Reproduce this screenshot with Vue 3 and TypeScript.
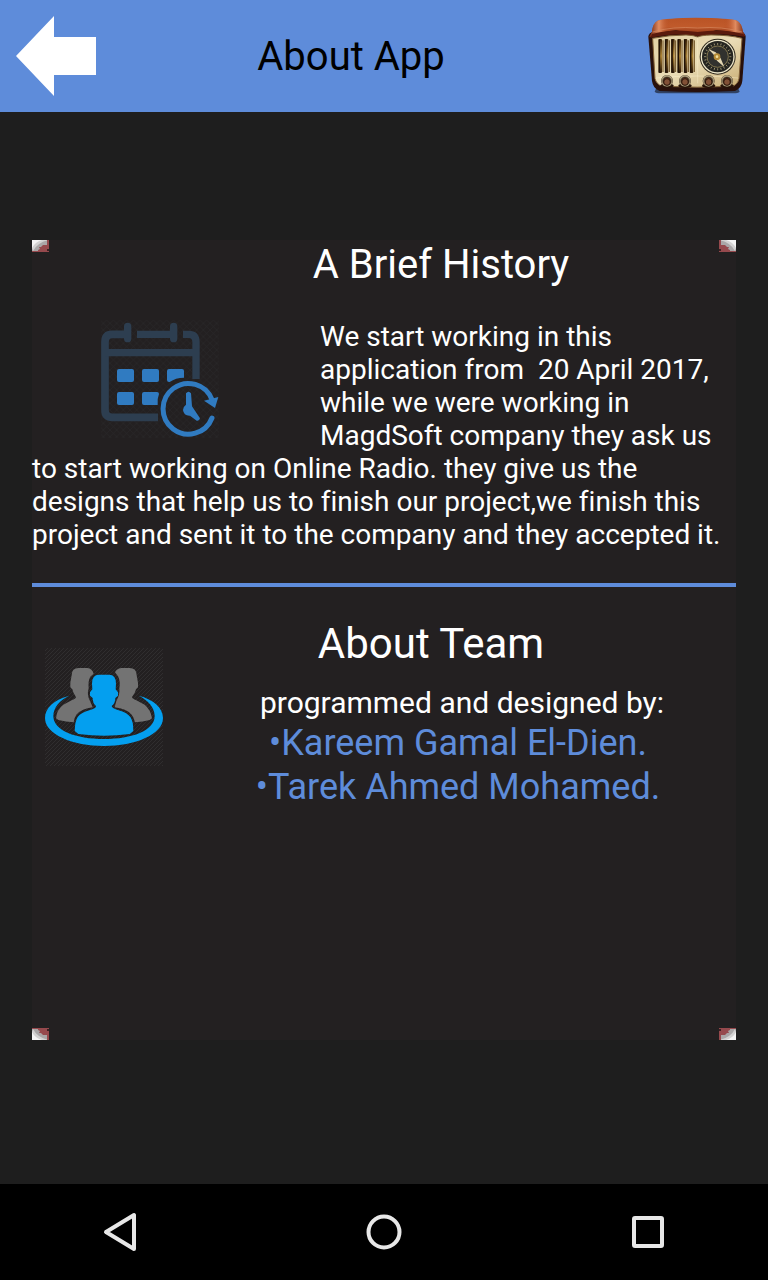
<script setup lang="ts">
const history: string =
  'We start working in this application from  20 April 2017, while we were working in MagdSoft company they ask us to start working on Online Radio. they give us the designs that help us to finish our project,we finish this project and sent it to the company and they accepted it.'
const members: string[] = ['Kareem Gamal El-Dien.', 'Tarek Ahmed Mohamed.']
const corners: string[] = ['top-left', 'top-right', 'bottom-left', 'bottom-right']
const grilles: number[] = [73, 92, 111, 130, 149, 167]
const knobs: number[] = [93, 147, 218, 273]
const ticks: number[] = Array.from({ length: 24 }, (_, i) => i * 15)
</script>

<template>
  <div class="page">
    <header class="bar">
      <button class="back" type="button" aria-label="Back">
        <svg viewBox="0 0 80 80"><path d="M0 40 38 0V21H80V59H38V80Z" fill="#fff" /></svg>
      </button>
      <h1>About App</h1>
      <svg class="radio" viewBox="0 0 372 312" aria-hidden="true">
        <defs>
          <linearGradient id="wood" x1="0" y1="0" x2="0" y2="1">
            <stop offset="0" stop-color="#b95325" />
            <stop offset=".45" stop-color="#c05a2b" />
            <stop offset="1" stop-color="#7c2911" />
          </linearGradient>
          <linearGradient id="woodside" x1="0" y1="0" x2="1" y2="0">
            <stop offset="0" stop-color="#6c200d" />
            <stop offset=".1" stop-color="#e08b60" />
            <stop offset=".22" stop-color="#b3481e" stop-opacity="0" />
            <stop offset=".78" stop-color="#b3481e" stop-opacity="0" />
            <stop offset=".9" stop-color="#e08b60" />
            <stop offset="1" stop-color="#6c200d" />
          </linearGradient>
          <linearGradient id="face" x1="0" y1="0" x2="1" y2="1">
            <stop offset="0" stop-color="#e2d1a5" />
            <stop offset=".5" stop-color="#eadcb6" />
            <stop offset="1" stop-color="#c9ad73" />
          </linearGradient>
          <linearGradient id="grille" x1="0" y1="0" x2="0" y2="1">
            <stop offset="0" stop-color="#3c2409" />
            <stop offset=".5" stop-color="#b08636" />
            <stop offset="1" stop-color="#2b1707" />
          </linearGradient>
          <radialGradient id="knob">
            <stop offset="0" stop-color="#b07145" />
            <stop offset=".45" stop-color="#67351b" />
            <stop offset=".6" stop-color="#3b2b1c" />
            <stop offset=".85" stop-color="#a99b7a" />
            <stop offset="1" stop-color="#443626" />
          </radialGradient>
        </defs>
        <path d="M60 254H307L311 263Q306 268 292 268H74Q60 268 56 263Z" fill="#304264" />
        <path d="M37 98Q38 86 52 83L183 72 317 83Q328 87 329 98L319 231Q316 254 297 261 184 267 71 261 51 254 48 231Z" fill="#28100b" />
        <path d="M48 83Q50 58 65 50Q90 42 180 41 280 42 303 50 316 56 321 83L327 96Q300 83 240 79L185 94 120 79Q70 83 40 100Z" fill="url(#wood)" />
        <path d="M48 83Q50 58 65 50Q90 42 180 41 280 42 303 50 316 56 321 83L327 96Q300 83 240 79L185 94 120 79Q70 83 40 100Z" fill="url(#woodside)" />
        <path d="M50 84Q110 66 185 72 260 66 318 84" fill="none" stroke="#d98d62" stroke-width="2" />
        <path d="M48 90Q110 72 185 84 260 72 322 90L326 98Q262 84 185 96 110 84 43 102Z" fill="#5a1a0d" />
        <path d="M50 103Q100 93 150 93 175 94 185 99 195 94 225 93 280 93 318 103L309 224Q306 240 290 247 184 252 78 247 61 240 57 224Z" fill="url(#face)" stroke="#84643a" stroke-width="3" />
        <path d="M185 100V238M60 222Q184 210 306 222" fill="none" stroke="#fff5d5" stroke-width="2" opacity=".6" />
        <g v-for="x in grilles" :key="x">
          <rect :x="x - 5" y="105" width="10" height="102" rx="3" fill="url(#grille)" />
          <path :d="`M${x - 3} 106V206`" stroke="#211207" stroke-width="5" />
          <path :d="`M${x + 8} 109V204`" stroke="#6a4b1d" stroke-width="3" />
        </g>
        <circle cx="245" cy="158" r="54" fill="#30291d" />
        <circle cx="245" cy="158" r="51" fill="#eee7ca" />
        <circle cx="245" cy="158" r="47" fill="#252521" />
        <g stroke="#c3b78e" stroke-width="2">
          <path v-for="t in ticks" :key="t" d="M245 117V123" :transform="`rotate(${t} 245 158)`" />
        </g>
        <circle cx="245" cy="158" r="32" fill="#31312e" stroke="#a7955d" stroke-width="2" />
        <path d="M217 135 239 145 254 163 265 189 243 170 232 151Z" fill="#e4d7b2" />
        <circle cx="243" cy="158" r="10" fill="#b48b37" />
        <circle cx="243" cy="158" r="4" fill="#f4df9b" />
        <g v-for="x in knobs" :key="x">
          <ellipse :cx="x" cy="245" rx="20" ry="7" fill="#271309" />
          <circle :cx="x" cy="231" r="18" fill="url(#knob)" />
          <path :d="`M${x - 14} 223Q${x} 208 ${x + 14} 223`" fill="none" stroke="#b5a884" stroke-width="3" />
          <circle :cx="x" cy="234" r="10" fill="#815036" stroke="#2c160b" stroke-width="3" />
        </g>
      </svg>
    </header>

    <main>
      <article class="panel">
        <svg v-for="c in corners" :key="c" class="corner" :class="c" viewBox="0 0 17 13" aria-hidden="true">
          <path d="M0 0H17V12H0Z" fill="#aaa7a8" />
          <path d="M0 0H15Q4 2 0 9Z" fill="#f4f4f4" />
          <path d="M10 0H16Q5 3 1 11L0 8Q3 2 10 0Z" fill="#d3d2d2" />
          <path d="M15 0H17V12H0V11H6V10L8 9 7 7H9L11 5H15Z" fill="#96494d" />
          <path d="M15 9H17V11H15Z" fill="#3a2022" />
        </svg>

        <section class="history">
          <h2>A Brief History</h2>
          <svg class="calendar" viewBox="33 30 354 354" aria-hidden="true">
            <defs>
              <pattern id="mesh" width="20" height="20" patternUnits="userSpaceOnUse">
                <path d="M0 0 20 20M20 0 0 20" stroke="#2a2829" stroke-width="2" />
              </pattern>
            </defs>
            <rect x="33" y="30" width="354" height="354" fill="url(#mesh)" />
            <g fill="none" stroke="#2d3e50" stroke-width="22">
              <path d="M113 73H66Q45 73 45 96V300Q45 322 67 322H204" stroke-width="23" />
              <path d="M141 73H251M279 73H296Q318 73 318 96V207M45 128H318" />
              <path d="M113 49V86M251 49V86" stroke-linecap="round" />
            </g>
            <g fill="#307bc1">
              <rect x="81" y="177" width="51" height="39" rx="6" />
              <rect x="156" y="177" width="51" height="39" rx="6" />
              <path d="M237 177H276Q282 177 282 183V203Q257 203 239 216H237Q231 216 231 210V183Q231 177 237 177Z" />
              <rect x="81" y="246" width="51" height="39" rx="6" />
              <path d="M162 246H201Q207 246 207 252 201 267 203 285H162Q156 285 156 279V252Q156 246 162 246Z" />
              <path d="M342 272 385 261 375 294Z" />
              <path d="M288 250Q296 241 303 250L306 289 330 325Q328 334 320 332L300 317Q281 318 279 300 279 290 288 284Z" />
            </g>
            <path d="M366 269A76 76 0 1 0 366 324" fill="none" stroke="#307bc1" stroke-width="15" stroke-linecap="round" />
          </svg>
          <p>{{ history }}</p>
        </section>

        <hr />

        <section class="team">
          <svg class="people" viewBox="39 36 354 354" aria-hidden="true">
            <defs>
              <pattern id="stripes" width="12" height="12" patternUnits="userSpaceOnUse">
                <path d="M-3 3 3-3M0 12 12 0M9 15 15 9" stroke="#302e2f" stroke-width="3" />
              </pattern>
            </defs>
            <rect x="39" y="36" width="354" height="354" fill="url(#stripes)" />
            <path d="M112 179C65 191 39 216 39 246 39 295 122 330 216 330S393 295 393 246C393 216 365 190 320 179 349 193 368 215 368 240 368 284 300 309 216 309S64 284 64 240C64 215 84 191 112 179Z" fill="#049fef" />
            <g fill="#737373">
              <path d="M119 118Q119 96 140 96H166Q181 98 185 113L175 122Q168 133 170 157 164 177 174 195L182 214Q149 218 133 236 126 246 125 259 102 258 79 252L72 247Q74 221 94 206L119 193Q131 189 132 183 123 171 121 160L115 154V140Z" />
              <path d="M314 118Q314 96 292 96H268Q253 98 249 109L259 122Q266 138 262 157 264 177 253 195L248 214Q283 218 299 236 307 246 309 259 332 258 353 252L360 247Q356 221 338 206L313 193Q301 189 300 183 310 171 312 160L318 154V140Z" />
            </g>
            <path d="M180 143Q180 116 201 116H231Q252 116 252 143L251 160 258 169V179L250 186Q250 202 239 210 240 217 260 223 285 230 295 243 304 255 304 285L293 294Q217 304 139 294L128 285Q129 255 137 243 148 229 172 223 193 217 192 210 182 202 182 186L174 179V169L181 160Z" fill="#049fef" />
          </svg>
          <div class="credits">
            <h2>About Team</h2>
            <p>programmed and designed by:</p>
            <ul>
              <li v-for="m in members" :key="m">•{{ m }}</li>
            </ul>
          </div>
        </section>
      </article>
    </main>

    <nav aria-label="System navigation">
      <button type="button" aria-label="Back">
        <svg viewBox="0 0 48 48"><path d="M38 7V41L10 24Z" /></svg>
      </button>
      <button type="button" aria-label="Home">
        <svg viewBox="0 0 48 48"><circle cx="24" cy="24" r="15.5" /></svg>
      </button>
      <button type="button" aria-label="Recent apps">
        <svg viewBox="0 0 48 48"><rect x="10" y="10" width="28" height="28" rx="1" /></svg>
      </button>
    </nav>
  </div>
</template>

<style>
body {
  margin: 0;
  background: #1e1e1e;
}
</style>

<style scoped>
.page {
  display: flex;
  flex-direction: column;
  min-height: 100vh;
  background: #1e1e1e;
  color: #fff;
  font-family: Roboto, "Liberation Sans", sans-serif;
  font-variant-ligatures: none;
}
h1, h2, p, ul {
  margin: 0;
  padding: 0;
  font-weight: 400;
}
svg {
  display: block;
}
button {
  padding: 0;
  border: 0;
  background: none;
}
.bar {
  display: flex;
  align-items: center;
  padding: 4px 8px 4px 16px;
  background: #5e8cda;
}
.back {
  width: 80px;
  height: 80px;
}
h1 {
  flex: 1;
  padding-top: 2px;
  margin-right: 30px;
  color: #000;
  font-size: 40px;
  line-height: 48px;
  text-align: center;
}
.radio {
  width: 124px;
  height: 104px;
}
main {
  display: flex;
  flex: 1;
  padding: 128px 32px 144px;
}
.panel {
  position: relative;
  flex: 1;
  background: #232021;
}
.corner {
  position: absolute;
  width: 17px;
  height: 13px;
}
.top-left {
  top: 0;
  left: 0;
}
.top-right {
  top: 0;
  right: 0;
  transform: scaleX(-1);
}
.bottom-left {
  bottom: 0;
  left: 0;
  transform: scaleY(-1);
}
.bottom-right {
  right: 0;
  bottom: 0;
  transform: scale(-1);
}
h2 {
  font-size: 40px;
  line-height: 50px;
  text-align: center;
}
.history h2 {
  padding-left: 114px;
  margin-bottom: 30px;
}
.calendar {
  float: left;
  width: 118px;
  height: 118px;
  margin: 0 101px 0 69px;
}
.history p {
  font-size: 28px;
  line-height: 33px;
  white-space: pre-wrap;
}
hr {
  clear: both;
  height: 4px;
  margin: 32px 0;
  border: 0;
  background: #5e8cda;
}
.team {
  display: flex;
  align-items: flex-start;
  padding-left: 13px;
}
.people {
  width: 118px;
  height: 118px;
  margin: 29px 17px 0 0;
}
.credits {
  flex: 1;
  text-align: center;
}
.credits h2 {
  margin-right: 54px;
  font-size: 42px;
}
.credits p {
  padding: 16px 0 0 8px;
  font-size: 30px;
  line-height: 36px;
}
.credits li {
  color: #5e8cda;
  font-size: 36px;
  line-height: 44px;
  list-style: none;
}
nav {
  display: flex;
  justify-content: space-between;
  padding: 24px 96px;
  background: #000;
}
nav button {
  width: 48px;
  height: 48px;
}
nav svg {
  fill: none;
  stroke: #e8e8e8;
  stroke-width: 4;
  stroke-linejoin: round;
}
</style>
